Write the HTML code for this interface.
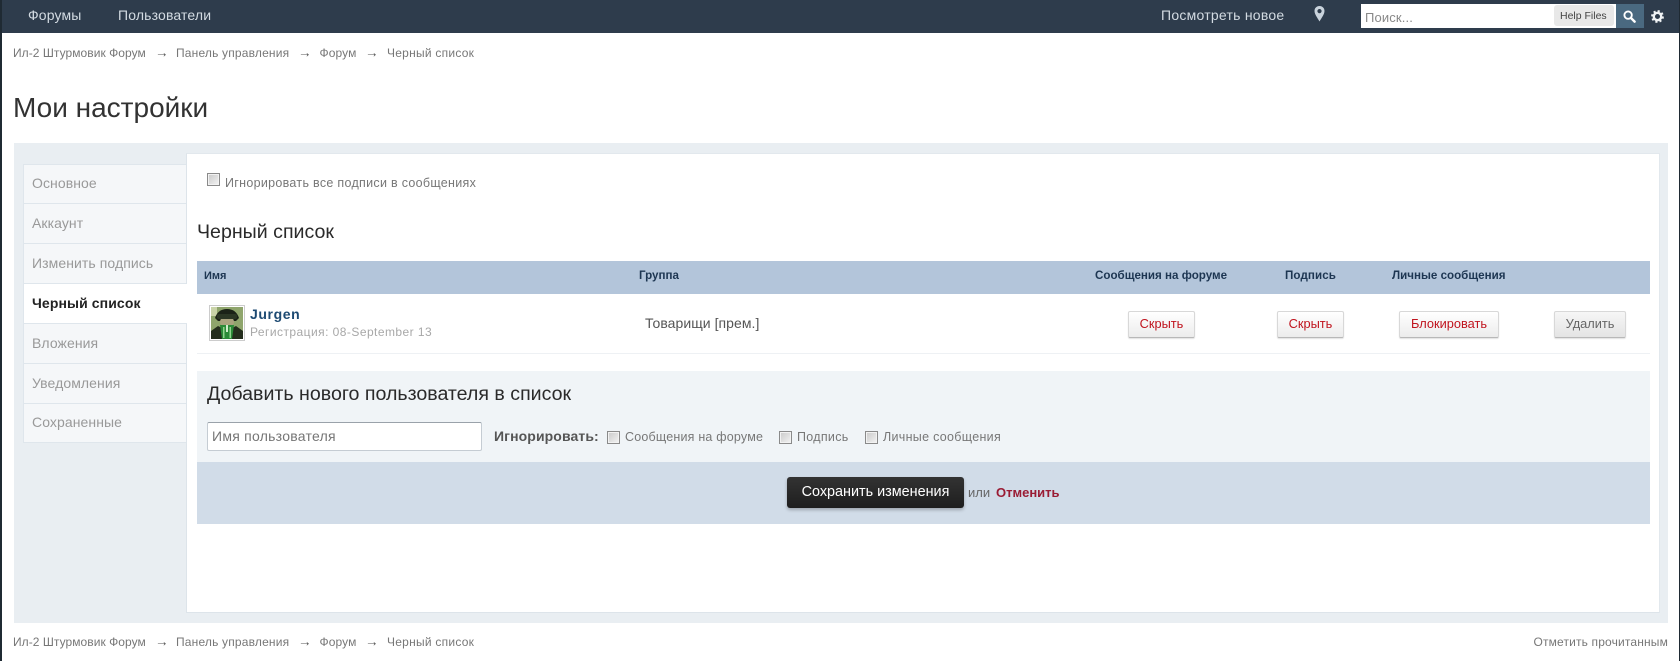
<!DOCTYPE html>
<html lang="ru"><head><meta charset="utf-8"><title>Мои настройки</title>
<style>
*{box-sizing:border-box}
html,body{margin:0;padding:0;width:1680px;height:661px;overflow:hidden;background:#fff}
body{position:relative;font-family:"Liberation Sans",Arial,sans-serif;color:#555}
.b{position:absolute}
.t{position:absolute;white-space:nowrap;line-height:20px;height:20px}
.nav{color:#d3dbe2;font-size:14px;letter-spacing:.15px}
.cr{color:#777;font-size:12px}
.cr i{font-style:normal;color:#555;font-size:13.500px}
.side{position:absolute;left:23px;width:163px;height:40px;background:#f5f7f9;border-bottom:1px solid #dfe6ec;border-left:1px solid #dfe6ec;color:#999;font-size:14px;line-height:38px;padding-left:8px;white-space:nowrap;letter-spacing:.08px}
.th{color:#1d3652;font-size:11.600px;font-weight:bold}
.btn{position:absolute;top:311px;height:27px;border:1px solid #d8d8d8;border-bottom-color:#b8b8b8;border-radius:2px;background:linear-gradient(#fff,#ececec);box-shadow:0 1px 1px rgba(0,0,0,.12);color:#c0141e;font-size:12.800px;line-height:24px;text-align:center;white-space:nowrap}
input[type=checkbox]{appearance:none;-webkit-appearance:none;position:absolute;margin:0;width:13px;height:13px;border:1px solid #8a8a8a;background:linear-gradient(135deg,#c9c9c9,#f4f4f4);box-shadow:inset 0 0 0 1px #f2f2f2}
.lab{color:#777;font-size:12.500px;letter-spacing:.3px}
</style></head><body>

<div class="b" style="left:0;top:0;width:1680px;height:33px;background:#2e3c4c"></div>
<div class="b" style="left:0;top:0;width:2px;height:661px;background:#1f2a33"></div>
<div class="b" style="left:1679px;top:0;width:1px;height:661px;background:#1f2a33"></div>

<div class="t nav" style="left:28px;top:5px">Форумы</div>
<div class="t nav" style="left:118px;top:5px">Пользователи</div>
<div class="t nav" style="left:1161px;top:5px;letter-spacing:.25px">Посмотреть новое</div>
<svg class="b" style="left:1314px;top:6px" width="11" height="16" viewBox="0 0 11 16"><path fill="#c9d3dc" fill-rule="evenodd" d="M5.500 0C2.500 0 .5 2.200.5 5c0 3.400 3.600 7.800 5 10.500C6.900 12.800 10.500 8.400 10.500 5c0-2.800-2-5-5-5zm0 3a2 2 0 1 1 0 4.200 2 2 0 0 1 0-4.200z"/></svg>

<div class="b" style="left:1361px;top:4px;width:255px;height:24px;background:#fff"></div>
<div class="t" style="left:1365px;top:8px;color:#888;font-size:13px;letter-spacing:.15px">Поиск...</div>
<div class="b" style="left:1554px;top:5px;width:60px;height:21px;background:#e8e8e8;border-radius:3px"></div>
<div class="t" style="left:1560px;top:6px;color:#444;font-size:10.500px">Help Files</div>
<div class="b" style="left:1616px;top:4px;width:28px;height:24px;background:#4a6980"></div>
<svg class="b" style="left:1623px;top:10px" width="13" height="13" viewBox="0 0 14 14"><circle cx="5.500" cy="5.500" r="4" fill="none" stroke="#fff" stroke-width="2"/><path d="M8.800 8.800L12.500 12.500" stroke="#fff" stroke-width="2.600" stroke-linecap="round"/></svg>
<svg class="b" style="left:1651px;top:10px" width="13" height="13" viewBox="0 0 14 14"><circle cx="7" cy="7" r="4" fill="none" stroke="#f0f3f5" stroke-width="2.600"/><circle cx="7" cy="7" r="5.800" fill="none" stroke="#f0f3f5" stroke-width="2.200" stroke-dasharray="2.300 2.250"/></svg>

<div class="t cr" style="left:13px;top:43px;letter-spacing:.05px">Ил-2 Штурмовик Форум</div>
<div class="t cr" style="left:155px;top:43px"><i>→</i></div>
<div class="t cr" style="left:176px;top:43px;letter-spacing:.18px">Панель управления</div>
<div class="t cr" style="left:298px;top:43px"><i>→</i></div>
<div class="t cr" style="left:319.500px;top:43px;letter-spacing:.1px">Форум</div>
<div class="t cr" style="left:365px;top:43px"><i>→</i></div>
<div class="t cr" style="left:387px;top:43px;letter-spacing:.25px">Черный список</div>

<div class="t" style="left:13px;top:98px;font-size:28px;color:#323232">Мои настройки</div>

<div class="b" style="left:14px;top:143px;width:1654px;height:480px;background:#e9eef2"></div>
<div class="b" style="left:186px;top:153px;width:1474px;height:460px;background:#fff;border-left:1px solid #dde4ea;border-bottom:1px solid #dde4ea;border-top:1px solid #e2e8ed;border-right:1px solid #e2e8ed"></div>

<div class="side" style="top:164px;border-top:1px solid #dfe6ec;height:40px;line-height:36px">Основное</div>
<div class="side" style="top:204px">Аккаунт</div>
<div class="side" style="top:244px">Изменить подпись</div>
<div class="side" style="top:284px;background:#fff;color:#222;font-weight:bold;font-size:14px;width:164px;letter-spacing:.1px">Черный список</div>
<div class="side" style="top:324px">Вложения</div>
<div class="side" style="top:364px">Уведомления</div>
<div class="side" style="top:404px;height:39px;line-height:36px">Сохраненные</div>

<input type="checkbox" style="left:207px;top:173px">
<div class="t lab" style="left:225px;top:173px">Игнорировать все подписи в сообщениях</div>

<div class="t" style="left:197px;top:222px;font-size:19.600px;color:#2a2a2a">Черный список</div>

<div class="b" style="left:197px;top:261px;width:1453px;height:33px;background:#b3c5da"></div>
<div class="t th" style="left:204px;top:266px;font-size:11px">Имя</div>
<div class="t th" style="left:639px;top:266px">Группа</div>
<div class="t th" style="left:1095px;top:266px">Сообщения на форуме</div>
<div class="t th" style="left:1285px;top:266px;letter-spacing:.1px">Подпись</div>
<div class="t th" style="left:1392px;top:266px">Личные сообщения</div>

<svg class="b" style="left:209px;top:305px" width="36" height="36" viewBox="0 0 36 36"><rect x=".5" y=".5" width="35" height="35" fill="#fff" stroke="#ccc"/><rect x="2" y="2" width="32" height="32" fill="#8fa56c"/><rect x="2" y="2" width="6" height="9" fill="#c9d3a8"/><path d="M2 34V26l7-5 4 2h10l4-2 7 5v8z" fill="#232d1c"/><path d="M6 13Q9 4 18 4t12 9l-3 3H9z" fill="#1b2217"/><ellipse cx="18" cy="17" rx="7" ry="6" fill="#aaa37e"/><rect x="8" y="9" width="20" height="5" rx="2" fill="#2b3624"/><path d="M11 20h14l-2 14H13z" fill="#2b8a38"/><path d="M14 22h1.500v11H14zM20.500 22H22v11h-1.500z" fill="#8fd48c"/><path d="M17 20h2v7h-2z" fill="#cfeecb"/></svg>
<div class="t" style="left:250px;top:304px;font-size:14px;font-weight:bold;color:#1d4a72;letter-spacing:.6px">Jurgen</div>
<div class="t" style="left:250px;top:322px;font-size:12px;color:#a8a8a8;letter-spacing:.45px">Регистрация: 08-September 13</div>
<div class="t" style="left:645px;top:313px;font-size:14px;color:#555;letter-spacing:.05px">Товарищи [прем.]</div>

<a class="btn" style="left:1128px;width:67px">Скрыть</a>
<a class="btn" style="left:1277px;width:67px">Скрыть</a>
<a class="btn" style="left:1399px;width:100px">Блокировать</a>
<a class="btn" style="left:1554px;width:72px;color:#666;background:linear-gradient(#f6f6f6,#e4e4e4)">Удалить</a>

<div class="b" style="left:197px;top:353px;width:1453px;height:1px;background:#eef1f4"></div>

<div class="b" style="left:197px;top:371px;width:1453px;height:91px;background:#f0f4f7"></div>
<div class="t" style="left:207px;top:384px;font-size:19.600px;color:#2a2a2a">Добавить нового пользователя в список</div>
<input class="b" placeholder="Имя пользователя" style="left:207px;top:422px;width:275px;height:29px;border:1px solid #c5ccd3;border-top-color:#9aa2aa;border-radius:2px;background:#fff;font:14px 'Liberation Sans',Arial,sans-serif;letter-spacing:.25px;padding:0 4px 2px;outline:none">
<div class="t" style="left:494px;top:426px;font-size:14px;font-weight:bold;color:#555;letter-spacing:.1px">Игнорировать:</div>
<input type="checkbox" style="left:607px;top:431px">
<div class="t lab" style="left:625px;top:427px;letter-spacing:.2px">Сообщения на форуме</div>
<input type="checkbox" style="left:779px;top:431px">
<div class="t lab" style="left:797px;top:427px">Подпись</div>
<input type="checkbox" style="left:865px;top:431px">
<div class="t lab" style="left:883px;top:427px">Личные сообщения</div>

<div class="b" style="left:197px;top:462px;width:1453px;height:62px;background:#d1dce8"></div>
<div class="b" style="left:787px;top:477px;width:177px;height:31px;border-radius:3px;background:linear-gradient(#333,#1e1e1e);box-shadow:0 2px 3px rgba(0,0,0,.25);color:#fff;font-size:14.400px;line-height:30px;text-align:center;white-space:nowrap">Сохранить изменения</div>
<div class="t" style="left:968px;top:483px;font-size:13px;color:#666">или</div>
<div class="t" style="left:996px;top:483px;font-size:13px;font-weight:bold;color:#9a1c34">Отменить</div>

<div class="t cr" style="left:13px;top:632px;letter-spacing:.05px">Ил-2 Штурмовик Форум</div>
<div class="t cr" style="left:155px;top:632px"><i>→</i></div>
<div class="t cr" style="left:176px;top:632px;letter-spacing:.18px">Панель управления</div>
<div class="t cr" style="left:298px;top:632px"><i>→</i></div>
<div class="t cr" style="left:319.500px;top:632px;letter-spacing:.1px">Форум</div>
<div class="t cr" style="left:365px;top:632px"><i>→</i></div>
<div class="t cr" style="left:387px;top:632px;letter-spacing:.25px">Черный список</div>
<div class="t cr" style="right:12px;top:632px;letter-spacing:.16px">Отметить прочитанным</div>

</body></html>
